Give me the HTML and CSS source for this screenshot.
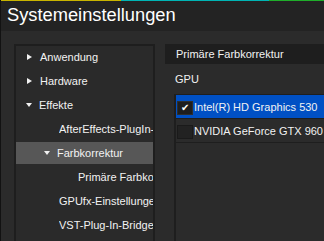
FILE: index.html
```html
<!DOCTYPE html>
<html>
  <head>
    <title>Systemeinstellungen</title>
    <link rel="stylesheet" href="styles.css">
  </head>
  <body>
    <div class="window">
      <div class="stripe"></div>
      <div class="titlebar">Systemeinstellungen</div>
      <div class="main">
        <div class="tree"> <!-- settings tree -->
          <div class="node lvl0"><span class="arrow right"></span>Anwendung</div>
          <div class="node lvl0"><span class="arrow right"></span>Hardware</div>
          <div class="node lvl0"><span class="arrow down"></span>Effekte</div>
          <div class="node leaf1"><span class="name">AfterEffects-PlugIn-Einstellungen</span></div>
          <div class="node lvl1 selected"><span class="arrow down"></span>Farbkorrektur</div>
          <div class="node leaf2"><span class="name">Primäre Farbkorrektur</span></div>
          <div class="node leaf1"><span class="name">GPUfx-Einstellungen</span></div>
          <div class="node leaf1"><span class="name">VST-Plug-In-Bridge</span></div>
        </div>
        <div class="content">
          <div class="section-head">Primäre Farbkorrektur</div>
          <div class="label">GPU</div>
          <div class="gpu-list">
            <div class="gpu-row active"><span class="check on">&#10004;</span>Intel(R) HD Graphics 530</div>
            <div class="gpu-row"><span class="check"></span>NVIDIA GeForce GTX 960</div>
          </div>
        </div>
      </div>
    </div>
  </body>
</html>
```

FILE: styles.css
```css
/* Dark settings dialog */
body {
  margin: 0;
  padding: 0;
  overflow: hidden;
  background-color: #2b2b2b;
  font-family: "Liberation Sans", Arial, sans-serif;
  font-size: 11px;
  color: #f2f2f2;
}

.window {
  height: 241px;
  border-left: 1px solid #121212;
  overflow: hidden;
}

.stripe { /* coloured accent line on top */
  height: 1px;
  background: linear-gradient(to right, #c8b400 0, #c8b400 120px, #00b4b4 120px, #00b4b4 268px, #1fae2a 268px);
}

.titlebar {
  height: 30px;
  line-height: 28px;
  padding-left: 6px;
  background-color: #232323;
  font-size: 18.3px;
  color: #ffffff;
}

.main {
  display: flex;
  padding: 13px 0 0 13px;
}

/* left column */
.tree {
  width: 141px;
  height: 220px;
  box-sizing: border-box;
  flex-shrink: 0;
  border: 2px solid #1e1e1e;
  background-color: #2a2a2a;
  overflow: hidden;
}

.node {
  height: 22px;
  line-height: 22px;
  margin-bottom: 2px;
  white-space: nowrap;
  display: flex;
  align-items: center;
  overflow: hidden;
}

.node .name { /* long names are cut at the panel edge */
  overflow: hidden;
  min-width: 0;
}

.node.lvl0 { padding-left: 10px; }
.node.lvl1 { padding-left: 28px; }
.node.leaf1 { padding-left: 43px; }
.node.leaf2 { padding-left: 62px; }

.node.selected {
  background-color: #575757;
}

.arrow {
  display: inline-block;
  flex-shrink: 0;
  width: 0;
  height: 0;
  margin-right: 9px;
}

.arrow.right {
  border-left: 5px solid #f2f2f2;
  border-top: 3px solid transparent;
  border-bottom: 3px solid transparent;
  margin-left: 1px;
  margin-right: 8px;
}

.arrow.down {
  border-top: 4px solid #f2f2f2;
  border-left: 3px solid transparent;
  border-right: 3px solid transparent;
  margin-right: 7px;
}

/* right column */
.content {
  flex: 1;
  margin-left: 10px;
}

.section-head {
  height: 20px;
  line-height: 20px;
  padding-left: 11px;
  background-color: #1e1e1e;
}

.label {
  height: 30px;
  line-height: 30px;
  padding-left: 10px;
}

.gpu-list {
  margin-left: 9px;
  height: 160px;
  border-left: 2px solid #1e1e1e;
  border-top: 1px solid #1e1e1e;
}

.gpu-row {
  height: 23px;
  border-bottom: 1px solid #1e1e1e;
  display: flex;
  align-items: center;
  white-space: nowrap;
}

.gpu-row.active {
  background-color: #0050c4;
}

.check {
  box-sizing: border-box;
  flex-shrink: 0;
  width: 16px;
  height: 14px;
  margin: 3px 1px 0 1px;
  background-color: #222222;
  border: 1px solid #1a1a1a;
  color: #ffffff;
  font-size: 10px;
  line-height: 12px;
  text-align: center;
}

.check.on {
  background-color: #1e1e1e;
  border-color: #2e2e2e;
}
```
